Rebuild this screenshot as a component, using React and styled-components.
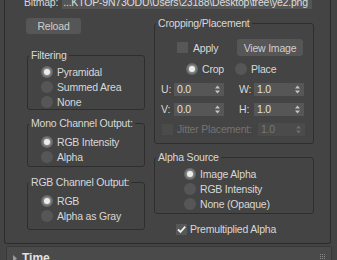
import React from "react";
import styled, { createGlobalStyle } from "styled-components";

const GlobalStyle = createGlobalStyle`
  html, body {
    margin: 0;
    padding: 0;
    background: #444444;
  }
  body {
    font-family: "Liberation Sans", Arial, sans-serif;
    font-size: 10.5px;
    letter-spacing: -0.2px;
    color: #d8d8d8;
  }
  * {
    box-sizing: border-box;
  }
`;

const Viewport = styled.div`
  width: 337px;
  height: 260px;
  overflow: hidden;
  background: #444444;
`;

const Rollout = styled.div`
  margin: -5px 0 0 4px;
  width: 327px;
  height: 249px;
  border: 1px solid #2c2c2c;
  border-top: none;
  border-radius: 0 0 3px 3px;
`;

const BitmapRow = styled.div`
  display: flex;
  align-items: center;
  height: 14px;
  padding-left: 19px;
`;

const PathField = styled.div`
  margin-left: 4px;
  width: 250px;
  height: 13px;
  line-height: 13px;
  padding: 0 1px;
  background: #555555;
  white-space: nowrap;
  overflow: hidden;
  color: #dcdcdc;
`;

const Columns = styled.div`
  display: flex;
  gap: 9px;
  padding-left: 21px;
`;

const LeftCol = styled.div`
  display: flex;
  flex-direction: column;
  width: 119px;
  padding-top: 9px;
`;

const RightCol = styled.div`
  display: flex;
  flex-direction: column;
  width: 160px;
  padding-top: 8px;
`;

const Button = styled.button`
  display: flex;
  align-items: center;
  justify-content: center;
  width: ${(p) => p.$w}px;
  height: ${(p) => p.$h}px;
  margin: 0;
  margin-left: ${(p) => (p.$auto ? "auto" : "0")};
  margin-right: ${(p) => p.$mr || 0}px;
  padding: 0;
  border: none;
  border-radius: 3px;
  background: #565656;
  color: #cfcfcf;
  font-family: inherit;
  font-size: 10.5px;
  letter-spacing: -0.2px;
`;

const Group = styled.fieldset`
  margin: ${(p) => p.$mt}px 0 0 ${(p) => p.$ml || 0}px;
  width: ${(p) => p.$w}px;
  height: ${(p) => p.$h}px;
  padding: ${(p) => p.$pt}px 0 0 0;
  border: 1px solid #2e2e2e;
  border-radius: 3px;
  display: flex;
  flex-direction: column;
  min-width: 0;

  legend {
    margin-left: 1px;
    padding: 0 2px;
    line-height: 13px;
    color: #d8d8d8;
  }
`;

const Row = styled.div`
  display: flex;
  align-items: center;
  height: ${(p) => p.$h || 15}px;
  margin-top: ${(p) => p.$mt || 0}px;
  padding-left: ${(p) => p.$pl || 0}px;
`;

const Option = styled.div`
  display: flex;
  align-items: center;
  width: ${(p) => (p.$w ? `${p.$w}px` : "auto")};
`;

const RadioDot = styled.span`
  flex: none;
  width: 12px;
  height: 12px;
  margin-right: 4px;
  border-radius: 50%;
  background: ${(p) => (p.$on ? "#666666" : "#565656")};
  display: flex;
  align-items: center;
  justify-content: center;

  &::after {
    content: "";
    display: ${(p) => (p.$on ? "block" : "none")};
    width: 6px;
    height: 6px;
    border-radius: 50%;
    background: #ececec;
    box-shadow: 0 0 2px 1px rgba(255, 255, 255, 0.35);
  }
`;

const Check = styled.span`
  flex: none;
  width: 11px;
  height: 11px;
  margin-right: ${(p) => p.$mr}px;
  background: ${(p) => (p.$off ? "#4b4b4b" : "#575757")};
  display: flex;
  align-items: center;
  justify-content: center;
`;

const Label = styled.span`
  white-space: nowrap;
  color: ${(p) => (p.$off ? "#737373" : "#d8d8d8")};
`;

const SpinPair = styled.div`
  display: flex;
  align-items: center;
  margin-left: ${(p) => p.$ml || 0}px;
`;

const SpinLabel = styled.span`
  width: ${(p) => p.$w}px;
`;

const Spinner = styled.div`
  display: flex;
  align-items: center;
  width: ${(p) => p.$w}px;
  height: 13px;
  margin-left: ${(p) => (p.$auto ? "auto" : "0")};
  margin-right: ${(p) => p.$mr || 0}px;
  padding: 0 4px 0 3px;
  background: ${(p) => (p.$off ? "#4b4b4b" : "#565656")};
  color: ${(p) => (p.$off ? "#777777" : "#e0e0e0")};

  span {
    flex: 1;
  }
`;

const TimeHeader = styled.div`
  display: flex;
  align-items: flex-start;
  margin: 2px 5px 0 6px;
  height: 20px;
  padding: 5px 0 0 6px;
  background: #4a4a4a;
  border: 1px solid #383838;
  border-radius: 2px;
  font-size: 12px;
  font-weight: bold;
  letter-spacing: 0;
  color: #e2e2e2;

  b {
    margin-left: 5px;
    line-height: 12px;
  }
`;

const Grip = styled.svg`
  margin-left: auto;
  margin-right: 5px;
  margin-top: 2px;
`;

const Arrows = () => (
  <svg width="5" height="9" viewBox="0 0 5 9">
    <path d="M0 3.5 L2.5 0.5 L5 3.5 Z M0 5.5 L2.5 8.5 L5 5.5 Z" fill="currentColor" opacity="0.8" />
  </svg>
);

const Radio = ({ on, w, children }) => (
  <Option $w={w}>
    <RadioDot $on={on} />
    <Label>{children}</Label>
  </Option>
);

const RadioList = ({ items, selected, pl }) =>
  items.map((it) => (
    <Row key={it} $pl={pl}>
      <Radio on={it === selected}>{it}</Radio>
    </Row>
  ));

const Spin = ({ value, w, auto, mr, off }) => (
  <Spinner $w={w} $auto={auto} $mr={mr} $off={off}>
    <span>{value}</span>
    <Arrows />
  </Spinner>
);

export default function App() {
  return (
    <Viewport>
      <GlobalStyle />
      <Rollout>
        <BitmapRow>
          <Label>Bitmap:</Label>
          <PathField>...KTOP-9N73ODU\Users\23188\Desktop\tree\ye2.png</PathField>
        </BitmapRow>
        <Columns>
          <LeftCol>
            <Button $w={55} $h={16}>Reload</Button>
            <Group $mt={15} $ml={1} $w={118} $h={61} $pt={2}>
              <legend>Filtering</legend>
              <RadioList
                pl={13}
                items={["Pyramidal", "Summed Area", "None"]}
                selected="Pyramidal"
              />
            </Group>
            <Group $mt={7} $ml={1} $w={118} $h={50} $pt={4}>
              <legend>Mono Channel Output:</legend>
              <RadioList pl={13} items={["RGB Intensity", "Alpha"]} selected="RGB Intensity" />
            </Group>
            <Group $mt={9} $ml={1} $w={118} $h={54} $pt={4}>
              <legend>RGB Channel Output:</legend>
              <RadioList pl={13} items={["RGB", "Alpha as Gray"]} selected="RGB" />
            </Group>
          </LeftCol>

          <RightCol>
            <Group $mt={0} $w={160} $h={127} $pt={9}>
              <legend>Cropping/Placement</legend>
              <Row $h={17} $pl={22}>
                <Check $mr={5} />
                <Label>Apply</Label>
                <Button $w={66} $h={17} $auto $mr={10}>View Image</Button>
              </Row>
              <Row $h={14} $mt={6} $pl={31}>
                <Radio on w={49}>Crop</Radio>
                <Radio>Place</Radio>
              </Row>
              <Row $h={14} $mt={6} $pl={6}>
                <SpinPair>
                  <SpinLabel $w={13}>U:</SpinLabel>
                  <Spin value="0.0" w={50} />
                </SpinPair>
                <SpinPair $ml={15}>
                  <SpinLabel $w={15}>W:</SpinLabel>
                  <Spin value="1.0" w={50} />
                </SpinPair>
              </Row>
              <Row $h={14} $mt={6} $pl={6}>
                <SpinPair>
                  <SpinLabel $w={13}>V:</SpinLabel>
                  <Spin value="0.0" w={50} />
                </SpinPair>
                <SpinPair $ml={15}>
                  <SpinLabel $w={15}>H:</SpinLabel>
                  <Spin value="1.0" w={50} />
                </SpinPair>
              </Row>
              <Row $h={14} $mt={6} $pl={7}>
                <Check $mr={4} $off />
                <Label $off>Jitter Placement:</Label>
                <Spin value="1.0" w={47} auto mr={8} off />
              </Row>
            </Group>

            <Group $mt={7} $w={160} $h={63} $pt={2}>
              <legend>Alpha Source</legend>
              <RadioList
                pl={29}
                items={["Image Alpha", "RGB Intensity", "None (Opaque)"]}
                selected="Image Alpha"
              />
            </Group>

            <Row $h={14} $mt={8} $pl={22}>
              <Check $mr={3}>
                <svg width="11" height="11" viewBox="0 0 11 11">
                  <path d="M2 5.5 L4.5 8 L9.2 2.6" stroke="#eeeeee" strokeWidth="1.8" fill="none" />
                </svg>
              </Check>
              <Label>Premultiplied Alpha</Label>
            </Row>
          </RightCol>
        </Columns>
      </Rollout>

      <TimeHeader>
        <svg width="4" height="7" viewBox="0 0 4 7" style={{ marginTop: 3 }}>
          <path d="M0 0 L4 3.5 L0 7 Z" fill="#9a9a9a" />
        </svg>
        <b>Time</b>
        <Grip width="6" height="6" viewBox="0 0 6 6">
          {[0, 2, 4].map((x) =>
            [0, 2, 4].map((y) => (
              <rect key={`${x}-${y}`} x={x} y={y} width="1" height="1" fill="#8a8a8a" />
            ))
          )}
        </Grip>
      </TimeHeader>
    </Viewport>
  );
}
